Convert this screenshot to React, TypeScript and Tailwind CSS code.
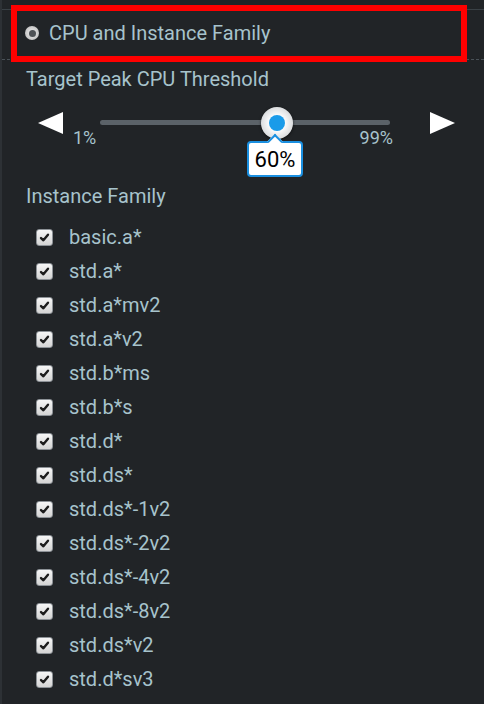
const families = [
  'basic.a*',
  'std.a*',
  'std.a*mv2',
  'std.a*v2',
  'std.b*ms',
  'std.b*s',
  'std.d*',
  'std.ds*',
  'std.ds*-1v2',
  'std.ds*-2v2',
  'std.ds*-4v2',
  'std.ds*-8v2',
  'std.ds*v2',
  'std.d*sv3',
]

function CheckBox() {
  return (
    <span className="flex h-[17px] w-[17px] items-center justify-center rounded-[3px] border border-[#8d9297] bg-[linear-gradient(#f6f6f6,#d4d4d4)]">
      <svg viewBox="0 0 12 12" className="h-[11px] w-[11px]">
        <path d="M2.2 6.6 L4.8 9 L9.8 3" fill="none" stroke="#1c1c1c" strokeWidth="2.6" strokeLinecap="round" strokeLinejoin="round" />
      </svg>
    </span>
  )
}

export default function App() {
  return (
    <div
      className="relative h-[704px] w-[484px] overflow-hidden border-l-2 border-[#2d3135] bg-[#212427] text-[#a7c3cc]"
      style={{ fontFamily: 'Roboto, "Liberation Sans", sans-serif' }}
    >
      {/* header section */}
      <div className="pt-[9px]">
        <div className="flex h-[51px] items-center gap-[10px] border-t border-b border-dashed border-t-[#3a4146] border-b-[#4a5258] pb-[3px] pl-[23px] [border-top-style:solid]">
          <span className="flex h-[14px] w-[14px] items-center justify-center rounded-full bg-[radial-gradient(circle,#f0f0f0,#b4b4b4)]">
            <span className="h-[7px] w-[7px] rounded-full bg-[#4e5256]" />
          </span>
          <span className="text-[20px] leading-[24px]">CPU and Instance Family</span>
        </div>
      </div>

      {/* red annotation box */}
      <div className="absolute left-[9px] top-[5px] h-[57px] w-[456px] border-[6px] border-[#ff0000]" />

      <div className="pl-[24px] pt-[7px]">
        <div className="text-[20px] leading-[24px]">Target Peak CPU Threshold</div>

        {/* slider */}
        <div className="mt-[21px] flex items-start pl-[12px]">
          <span className="h-0 w-0 border-y-[11px] border-r-[25px] border-y-transparent border-r-white" />
          <div className="ml-[10px] w-[320px]">
            <div className="relative ml-[27px] mr-[3px] mt-[8px] h-[5px] rounded-full bg-[#5b6268]">
              <div className="absolute left-[161px] top-[-13px] flex h-[32px] w-[32px] items-center justify-center rounded-full bg-[radial-gradient(circle,#ffffff_30%,#c0c4c7)] shadow-[0_1px_3px_rgba(0,0,0,0.6)]">
                <span className="h-[16px] w-[16px] rounded-full bg-[#1a9be9]" />
              </div>
              <div className="absolute left-[147px] top-[21px] flex h-[36px] w-[56px] items-center justify-center rounded-[4px] border-2 border-[#1a8fe0] bg-white text-[22px] text-black">
                <span className="absolute left-1/2 top-[-7px] h-[11px] w-[11px] -translate-x-1/2 rotate-45 border-l-2 border-t-2 border-[#1a8fe0] bg-white" />
                <span className="relative">60%</span>
              </div>
            </div>
            <div className="mt-[3px] flex justify-between text-[18px] leading-[20px]">
              <span>1%</span>
              <span>99%</span>
            </div>
          </div>
          <span className="ml-[37px] h-0 w-0 border-y-[11px] border-l-[25px] border-y-transparent border-l-white" />
        </div>

        <div className="mt-[36px] text-[20px] leading-[24px]">Instance Family</div>

        <div className="mt-[12px] flex flex-col pl-[10px]">
          {families.map((f) => (
            <div key={f} className="flex h-[34px] items-center gap-[16px]">
              <CheckBox />
              <span className="text-[20px]">{f}</span>
            </div>
          ))}
        </div>
      </div>
    </div>
  )
}
